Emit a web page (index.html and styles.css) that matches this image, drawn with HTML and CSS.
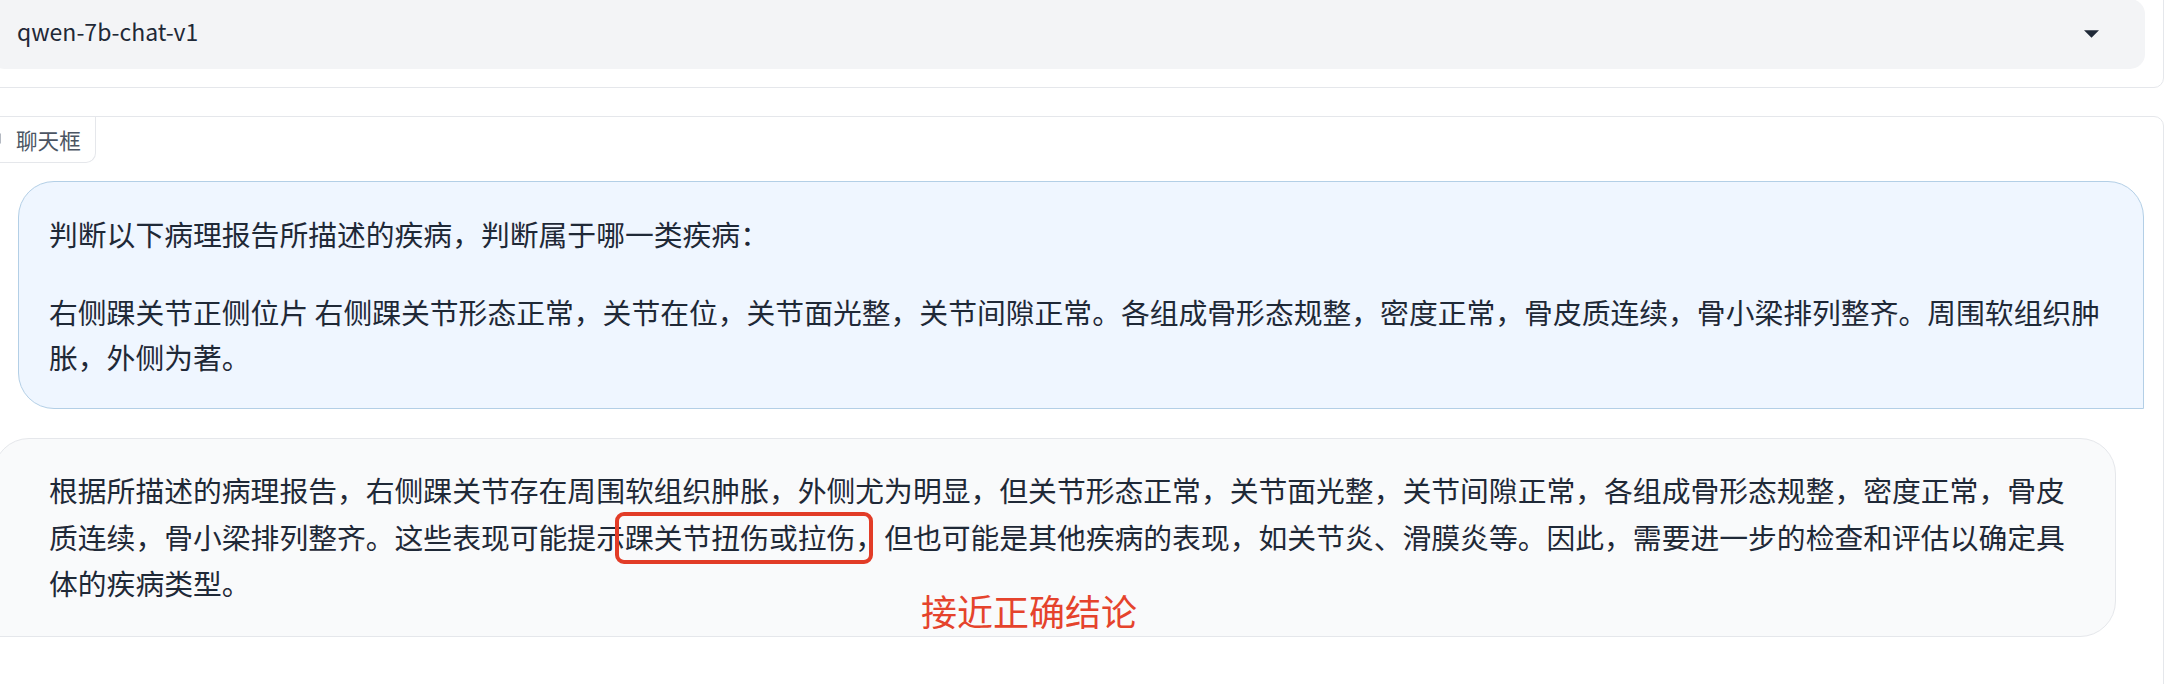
FILE: index.html
```html
<!DOCTYPE html>
<html lang="zh-CN">
<head>
<meta charset="utf-8">
<title>qwen-7b-chat-v1</title>
<link rel="stylesheet" href="styles.css">
</head>
<body>
<div class="page">
  <div class="block model-block">
    <div class="dropdown">
      <span class="dd-value">qwen-7b-chat-v1</span>
      <svg class="dd-arrow" viewBox="0 0 18 9" width="15" height="8" aria-hidden="true"><path d="M0 0 H18 L9 9 Z" fill="#1f2937"/></svg>
    </div>
  </div>

  <div class="block chat-block">
    <div class="chat-label">
      <svg class="label-icon" viewBox="0 0 24 24" width="18" height="18" aria-hidden="true"><path d="M4 4h16v12H8l-4 4z" fill="none" stroke="#9ca3af" stroke-width="2" stroke-linejoin="round"/></svg>
      <span>聊天框</span>
    </div>
    <div class="messages">
      <div class="msg user">
        <p>判断以下病理报告所描述的疾病，判断属于哪一类疾病：</p>
        <p>右侧踝关节正侧位片 右侧踝关节形态正常，关节在位，关节面光整，关节间隙正常。各组成骨形态规整，密度正常，骨皮质连续，骨小梁排列整齐。周围软组织肿胀，外侧为著。</p>
      </div>
      <div class="msg bot">
        <p>根据所描述的病理报告，右侧踝关节存在周围软组织肿胀，外侧尤为明显，但关节形态正常，关节面光整，关节间隙正常，各组成骨形态规整，密度正常，骨皮质连续，骨小梁排列整齐。这些表现可能提示<span class="hl">踝关节扭伤或拉伤，</span>但也可能是其他疾病的表现，如关节炎、滑膜炎等。因此，需要进一步的检查和评估以确定具体的疾病类型。</p>
        <span class="annot">接近正确结论</span>
      </div>
    </div>
  </div>
</div>
</body>
</html>
```

FILE: styles.css
```css
html, body {
  margin: 0;
  padding: 0;
  background: #ffffff;
}

body {
  width: 2164px;
  height: 684px;
  overflow: hidden;
  font-family: "Noto Sans CJK SC", "Noto Sans", sans-serif;
  color: #1f2937;
}

.page {
  display: flex;
  flex-direction: column;
  gap: 28px;
}

.block {
  border: 1px solid #e5e7eb;
  border-radius: 10px;
  background: #ffffff;
  margin-left: -29px;
}

.model-block {
  margin-top: -20px;
  padding: 18px;
}

.dropdown {
  height: 70px;
  box-sizing: border-box;
  background: #f3f4f6;
  border-radius: 15px;
  display: flex;
  align-items: center;
  justify-content: space-between;
  padding: 0 46px 6px 27px;
}

.dd-value {
  font-size: 23px;
  color: #1f2937;
  white-space: nowrap;
}

.dd-arrow {
  display: block;
  margin-top: 6px;
}

.chat-block {
  position: relative;
  padding: 64px 19px 80px 21px;
  border-top-left-radius: 0;
}

.chat-label {
  position: absolute;
  top: 0;
  left: 0;
  height: 45px;
  display: flex;
  align-items: center;
  gap: 13px;
  padding: 0 14px 0 13px;
  border-right: 1px solid #e5e7eb;
  border-bottom: 1px solid #e5e7eb;
  border-bottom-right-radius: 10px;
  background: #ffffff;
  font-size: 21.6px;
  color: #4b5563;
}

.label-icon {
  display: block;
}

.messages {
  display: flex;
  flex-direction: column;
  gap: 29px;
}

.msg {
  position: relative;
  font-size: 28.8px;
  border-radius: 36px;
}

.msg p {
  margin: 0;
}

.msg.user {
  align-self: flex-end;
  width: 2126px;
  box-sizing: border-box;
  background: #eff6ff;
  border: 1px solid #b3cfe6;
  border-bottom-right-radius: 0;
  padding: 29px 30px 29px 30px;
  line-height: 45px;
}

.msg.user p + p {
  margin-top: 33px;
}

.msg.bot {
  align-self: flex-start;
  width: 2123px;
  box-sizing: border-box;
  background: #f9fafb;
  border: 1px solid #e5e7eb;
  border-bottom-left-radius: 0;
  padding: 28px 30px 29px 55px;
  line-height: 46.5px;
}

.hl {
  position: relative;
}

.hl::after {
  content: "";
  position: absolute;
  left: -10px;
  right: 11px;
  top: -4px;
  bottom: -7px;
  border: 4px solid #e23c27;
  border-radius: 9px;
}

.annot {
  position: absolute;
  left: 927px;
  top: 153px;
  font-size: 36px;
  line-height: 36px;
  color: #e5432c;
  white-space: nowrap;
}
```
